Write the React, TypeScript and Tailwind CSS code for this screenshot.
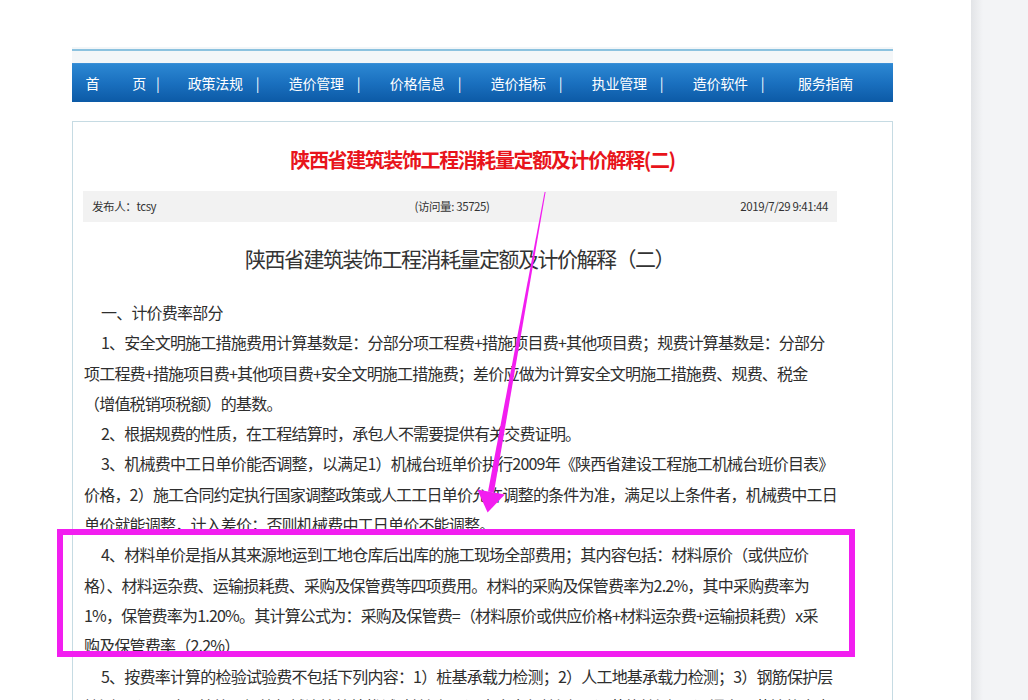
import React from 'react';

const NAV_ITEMS = ['政策法规', '造价管理', '价格信息', '造价指标', '执业管理', '造价软件'];

// article body, one entry per paragraph, each already split into its printed lines
const PARAGRAPHS: { indent: boolean; lines: string[] }[] = [
  { indent: true, lines: ['一、计价费率部分'] },
  {
    indent: true,
    lines: [
      '1、安全文明施工措施费用计算基数是：分部分项工程费+措施项目费+其他项目费；规费计算基数是：分部分',
      '项工程费+措施项目费+其他项目费+安全文明施工措施费；差价应做为计算安全文明施工措施费、规费、税金',
      '（增值税销项税额）的基数。',
    ],
  },
  { indent: true, lines: ['2、根据规费的性质，在工程结算时，承包人不需要提供有关交费证明。'] },
  {
    indent: true,
    lines: [
      '3、机械费中工日单价能否调整，以满足1）机械台班单价执行2009年《陕西省建设工程施工机械台班价目表》',
      '价格，2）施工合同约定执行国家调整政策或人工工日单价允许调整的条件为准，满足以上条件者，机械费中工日',
      '单价就能调整，计入差价；否则机械费中工日单价不能调整。',
    ],
  },
  {
    indent: true,
    lines: [
      '4、材料单价是指从其来源地运到工地仓库后出库的施工现场全部费用；其内容包括：材料原价（或供应价',
      '格）、材料运杂费、运输损耗费、采购及保管费等四项费用。材料的采购及保管费率为2.2%，其中采购费率为',
      '1%，保管费率为1.20%。其计算公式为：采购及保管费=（材料原价或供应价格+材料运杂费+运输损耗费）x采',
      '购及保管费率（2.2%）',
    ],
  },
  {
    indent: true,
    lines: [
      '5、按费率计算的检验试验费不包括下列内容：1）桩基承载力检测；2）人工地基承载力检测；3）钢筋保护层',
      '检测；4）面砖、植筋、钢筋机械连接等拉拔试验检测；5）室内空气检测；6）节能检测；7）门窗、幕墙的水密',
    ],
  },
];

function NavBar() {
  return (
    <div className="flex h-[39px] items-center border-t border-[#3b8fd6] bg-gradient-to-b from-[#2c88d3] via-[#1a70bf] to-[#0c5aa6] text-[14px] tracking-[-0.3px] text-white">
      <div className="flex w-[101px] justify-center">
        <span>首</span>
        <span className="w-[33px]" />
        <span>页</span>
        <span className="ml-[10px]">|</span>
      </div>
      {NAV_ITEMS.map((item) => (
        <div key={item} className="flex w-[101px] justify-center">
          <span>{item}</span>
          <span className="ml-[13px]">|</span>
        </div>
      ))}
      <div className="flex w-[101px] justify-center pr-[8px]">
        <span>服务指南</span>
      </div>
    </div>
  );
}

function Annotation() {
  // magenta marker drawn over the screenshot: a tapered arrow and a box around paragraph 4
  return (
    <svg className="pointer-events-none absolute inset-0" width="1028" height="700" viewBox="0 0 1028 700">
      <polygon points="544.6,192 545.6,192 493.9,492.5 488,491.5" fill="#f21ef0" />
      <polygon points="477.2,489.5 504.8,494.5 487.6,512.5" fill="#f21ef0" />
      <rect x="60" y="532" width="792" height="122" fill="none" stroke="#f21ef0" strokeWidth="6" />
    </svg>
  );
}

export default function App() {
  return (
    <div
      className="relative flex h-[700px] w-[1028px] overflow-hidden bg-white"
      style={{ fontFamily: '"Noto Sans CJK SC", "Noto Sans", sans-serif' }}
    >
      <div className="flex-1 pt-[47px]">
        <div className="ml-[72px] w-[821px]">
          <div className="h-[16px] bg-[#f3f6f8] pt-[2px]">
            <div className="h-[2px] bg-[#8cc2df]" />
          </div>
          <NavBar />

          <div className="mt-[19px] border border-[#c6dbe3] pb-10">
            <h1 className="pt-[23px] text-center text-[20px] font-bold leading-[30px] tracking-[-1.4px] text-[#e8141b]">
              陕西省建筑装饰工程消耗量定额及计价解释(二)
            </h1>

            <div className="ml-[10px] mt-[16px] grid h-[31px] w-[754px] grid-cols-3 items-center bg-[#f2f2f2] px-[9px] text-[11.5px] tracking-[-0.4px] text-[#333]">
              <span>发布人：tcsy</span>
              <span className="pr-[16px] text-center">(访问量: 35725)</span>
              <span className="text-right">2019/7/29 9:41:44</span>
            </div>

            <div className="w-[762px] pl-[11px]">
              <h2 className="mt-[20px] text-center text-[21px] leading-[32px] tracking-[-1.5px] text-[#333]">
                陕西省建筑装饰工程消耗量定额及计价解释（二）
              </h2>

              <div className="mt-[23px] text-[16px] leading-[30.3px] tracking-[-0.8px] text-[#2e2e2e]">
                {PARAGRAPHS.map((p, i) => (
                  <p key={i} className={p.indent ? 'whitespace-nowrap indent-[17px]' : 'whitespace-nowrap'}>
                    {p.lines.map((line, j) => (
                      <React.Fragment key={j}>
                        {j > 0 && <br />}
                        {line}
                      </React.Fragment>
                    ))}
                  </p>
                ))}
              </div>
            </div>
          </div>
        </div>
      </div>

      <div className="w-[57px] bg-[linear-gradient(to_right,#e2e4e7,#f3f4f6_12px)]" />

      <Annotation />
    </div>
  );
}
